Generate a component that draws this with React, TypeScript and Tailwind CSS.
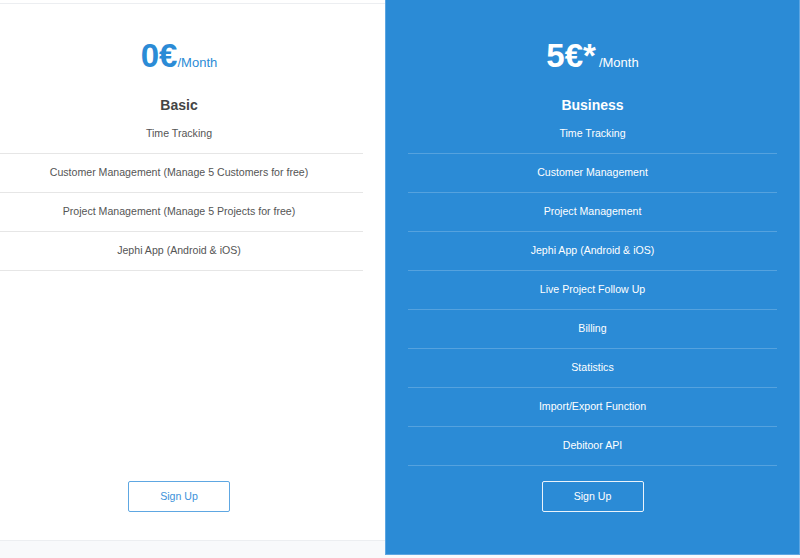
const basicFeatures = [
  'Time Tracking',
  'Customer Management (Manage 5 Customers for free)',
  'Project Management (Manage 5 Projects for free)',
  'Jephi App (Android & iOS)',
]

const businessFeatures = [
  'Time Tracking',
  'Customer Management',
  'Project Management',
  'Jephi App (Android & iOS)',
  'Live Project Follow Up',
  'Billing',
  'Statistics',
  'Import/Export Function',
  'Debitoor API',
]

export default function App() {
  return (
    <div
      className="flex h-[558px] w-[800px] overflow-hidden bg-[#f8f9fb]"
      style={{ fontFamily: '"Liberation Sans", Arial, sans-serif' }}
    >
      {/* basic plan, partly off screen on the left */}
      <div className="-ml-[27px] flex w-[412px] shrink-0 flex-col">
        <div className="h-[3px] bg-white" />
        <div className="flex h-[538px] flex-col border-y border-[#eceef1] bg-white px-[22px] pt-[35px] pb-[28px]">
          <div className="flex items-baseline justify-center text-[#2b8bd6]">
            <span className="text-[33px] font-bold leading-[33px]">0€</span>
            <span className="text-[13px]">/Month</span>
          </div>
          <h3 className="mt-[22px] h-[20px] text-center text-[14px] font-bold leading-[20px] text-[#444]">Basic</h3>
          <ul>
            {basicFeatures.map((f) => (
              <li
                key={f}
                className="flex h-[39px] items-center justify-center border-b border-[#e6e6e6] text-[10.6px] text-[#555]"
              >
                {f}
              </li>
            ))}
          </ul>
          <button
            type="button"
            className="mx-auto mt-auto h-[31px] w-[102px] rounded-[2px] border border-[#5ea7e2] text-[10.6px] text-[#3c92da]"
          >
            Sign Up
          </button>
        </div>
      </div>

      {/* business plan */}
      <div className="flex h-[555px] w-[415px] shrink-0 flex-col border-x border-b border-[#5ca6e2] bg-[#2b8bd6] px-[22px] pt-[39px] text-white">
        <div className="flex items-baseline justify-center">
          <span className="text-[33px] font-bold leading-[33px]">5€*</span>
          <span className="ml-[3px] text-[13px]">/Month</span>
        </div>
        <h3 className="mt-[22px] h-[20px] text-center text-[14px] font-bold leading-[20px]">Business</h3>
        <ul>
          {businessFeatures.map((f) => (
            <li
              key={f}
              className="flex h-[39.12px] items-center justify-center border-b border-white/20 text-[10.6px]"
            >
              {f}
            </li>
          ))}
        </ul>
        <button
          type="button"
          className="mx-auto mt-[15px] h-[31px] w-[102px] rounded-[2px] border border-white/90 text-[10.6px] text-white"
        >
          Sign Up
        </button>
      </div>
    </div>
  )
}
